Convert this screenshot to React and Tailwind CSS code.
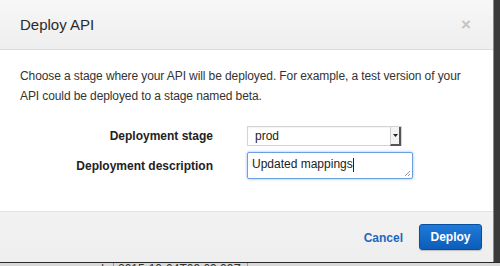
const App = () => {
  return (
    <div
      className="w-[500px] h-[266px] overflow-hidden bg-[#4a4a4a] flex flex-col"
      style={{ fontFamily: '"Liberation Sans", Arial, sans-serif' }}
    >
      <div className="flex">
        <div className="w-[494px] h-[262px] bg-white flex flex-col border-r border-[#8a8a8a]">
          {/* header */}
          <div className="h-[50px] shrink-0 flex items-center justify-between pl-[20px] pr-[22px] bg-gradient-to-b from-[#f7f7f7] to-[#eeeeee] border-b border-[#dcdcdc]">
            <span className="text-[15px] text-[#2a2a2a] pt-[1px]">Deploy API</span>
            <span className="text-[17px] font-bold text-[#c4c4c4] leading-none">×</span>
          </div>

          {/* body */}
          <div className="flex-1 pl-[20px] pr-[24px] pt-[16px]">
            <p className="text-[12px] leading-[20px] text-[#333] tracking-[-0.1px]">
              Choose a stage where your API will be deployed. For example, a test version of your API could be deployed to a stage named beta.
            </p>
            <div className="mt-[20px] flex flex-col gap-[6px]">
              <div className="flex items-center">
                <label className="w-[193px] text-right text-[12px] font-bold text-[#222]">
                  Deployment stage
                </label>
                <div className="ml-[34px] w-[155px] h-[20px] flex border border-[#d4d4d4] bg-white shadow-[inset_0_1px_1px_rgba(0,0,0,0.05)]">
                  <span className="flex-1 pl-[7px] text-[12px] leading-[19px] text-[#222]">prod</span>
                  <span className="w-[11px] h-[19px] flex items-center justify-center bg-[#f3f3f3] border-l border-[#cfcfcf] border-r-2 border-b-2 border-r-[#555] border-b-[#555]">
                    <svg width="5" height="3" viewBox="0 0 5 3">
                      <path d="M0 0h5L2.5 3z" fill="#222" />
                    </svg>
                  </span>
                </div>
              </div>
              <div className="flex items-center">
                <label className="w-[193px] text-right text-[12px] font-bold text-[#222]">
                  Deployment description
                </label>
                <div className="ml-[34px] relative w-[166px] h-[27px] border border-[#6aa0e0] rounded-[2px] bg-white shadow-[0_0_3px_rgba(80,140,230,0.6)]">
                  <span className="absolute left-[4px] top-[3px] text-[12px] text-[#222] leading-[16px]">
                    Updated mappings<span className="inline-block w-px h-[14px] bg-[#222] align-middle" />
                  </span>
                  <svg className="absolute right-[1px] bottom-[1px]" width="7" height="7" viewBox="0 0 7 7">
                    <path d="M6 1L1 6M6 4L4 6" stroke="#999" strokeWidth="1" />
                  </svg>
                </div>
              </div>
            </div>
          </div>

          {/* footer */}
          <div className="h-[51px] shrink-0 flex items-center justify-end gap-[16px] pr-[11px] bg-gradient-to-b from-[#f2f2f2] to-[#eeeeee] border-t border-[#e2e2e2]">
            <button className="text-[12px] font-bold text-[#1f66bf] pt-[1px]">Cancel</button>
            <button className="w-[63px] h-[26px] rounded-[3px] text-[12px] font-bold text-white bg-gradient-to-b from-[#1f7ad8] to-[#0c5db9] border border-[#0a4f9e] shadow-[0_1px_1px_rgba(0,0,0,0.2)]">
              Deploy
            </button>
          </div>
        </div>
        <div className="flex-1 bg-[#3a3a3a]" />
      </div>
      <div className="flex-1 relative bg-[#d8d8d8] border-t border-[#2a2a2a] text-[12px] text-[#333]">
        <span className="absolute left-[80px] top-[-3px]">prod</span>
        <span className="absolute left-[113px] top-0 h-full w-px bg-[#999]" />
        <span className="absolute left-[118px] top-[-3px]">2015-10-04T09:09:09Z</span>
        <span className="absolute left-[247px] top-0 h-full w-px bg-[#999]" />
      </div>
    </div>
  );
};

export default App;
